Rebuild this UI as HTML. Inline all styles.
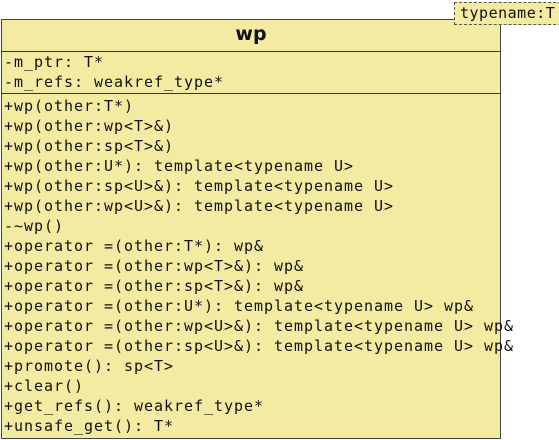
<!DOCTYPE html>
<html><head><style>
body{margin:0;width:559px;height:440px;background:#fff;position:relative;overflow:hidden;font-family:"DejaVu Sans Mono","Liberation Mono",monospace}
.box{position:absolute;left:1px;top:19px;width:498px;height:418px;background:#f2eba1;border:1.5px solid #444}
.hr{position:absolute;left:0;width:100%;height:0;border-top:1.5px solid #333}
.t{position:absolute;left:0;right:0;top:0px;text-align:center;font:bold 19px "DejaVu Sans","Liberation Sans",sans-serif;color:#111;line-height:28px}
.l{position:absolute;left:2px;font-size:15px;letter-spacing:0.97px;line-height:20px;white-space:pre;color:#111}
.tp{position:absolute;left:454px;top:2px;width:110px;height:21px;background:#f2eba1;border:1.5px dashed #555;font-size:15px;letter-spacing:0.5px;line-height:21px;padding-left:5px;white-space:pre;color:#111}
</style></head><body>
<div class="box">
<div class="t">wp</div>
<div class="hr" style="top:31px"></div>
<div class="l" style="top:32px">-m_ptr: T*
-m_refs: weakref_type*</div>
<div class="hr" style="top:73px"></div>
<div class="l" style="top:76px">+wp(other:T*)
+wp(other:wp&lt;T&gt;&amp;)
+wp(other:sp&lt;T&gt;&amp;)
+wp(other:U*): template&lt;typename U&gt;
+wp(other:sp&lt;U&gt;&amp;): template&lt;typename U&gt;
+wp(other:wp&lt;U&gt;&amp;): template&lt;typename U&gt;
-~wp()
+operator =(other:T*): wp&amp;
+operator =(other:wp&lt;T&gt;&amp;): wp&amp;
+operator =(other:sp&lt;T&gt;&amp;): wp&amp;
+operator =(other:U*): template&lt;typename U&gt; wp&amp;
+operator =(other:wp&lt;U&gt;&amp;): template&lt;typename U&gt; wp&amp;
+operator =(other:sp&lt;U&gt;&amp;): template&lt;typename U&gt; wp&amp;
+promote(): sp&lt;T&gt;
+clear()
+get_refs(): weakref_type*
+unsafe_get(): T*</div>
</div>
<div class="tp">typename:T</div>
</body></html>
